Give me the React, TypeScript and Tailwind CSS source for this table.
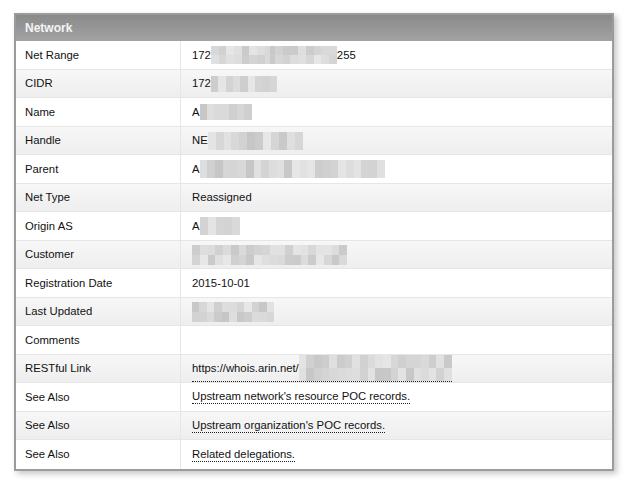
import React from "react";

type Seg = { t: "text"; v: string } | { t: "blur"; w: number; h: number; seed: number; rows?: number };

function Blur({ w, h, seed, rows = 2 }: { w: number; h: number; seed: number; rows?: number }) {
  const cell = 8;
  const cols = Math.ceil(w / cell);
  const cells: string[] = [];
  let s = seed * 9301 + 49297;
  for (let i = 0; i < cols * rows; i++) {
    s = (s * 9301 + 49297) % 233280;
    const g = 198 + Math.floor((s / 233280) * 34);
    cells.push(`rgb(${g},${g},${g})`);
  }
  return (
    <span
      className="inline-grid align-middle"
      style={{ width: w, height: h, gridTemplateColumns: `repeat(${cols}, 1fr)`, gridTemplateRows: `repeat(${rows}, 1fr)` }}
    >
      {cells.map((c, i) => (
        <span key={i} style={{ background: c }} />
      ))}
    </span>
  );
}

const rows: { label: string; value: Seg[]; link?: boolean }[] = [
  { label: "Net Range", value: [{ t: "text", v: "172" }, { t: "blur", w: 54, h: 18, seed: 1 }, { t: "blur", w: 10, h: 18, seed: 7, rows: 1 }, { t: "blur", w: 62, h: 18, seed: 2 }, { t: "text", v: "255" }] },
  { label: "CIDR", value: [{ t: "text", v: "172" }, { t: "blur", w: 66, h: 16, seed: 3, rows: 1 }] },
  { label: "Name", value: [{ t: "text", v: "A" }, { t: "blur", w: 52, h: 16, seed: 4, rows: 1 }] },
  { label: "Handle", value: [{ t: "text", v: "NE" }, { t: "blur", w: 95, h: 18, seed: 5, rows: 1 }] },
  { label: "Parent", value: [{ t: "text", v: "A" }, { t: "blur", w: 185, h: 18, seed: 6, rows: 1 }] },
  { label: "Net Type", value: [{ t: "text", v: "Reassigned" }] },
  { label: "Origin AS", value: [{ t: "text", v: "A" }, { t: "blur", w: 40, h: 18, seed: 8, rows: 1 }] },
  { label: "Customer", value: [{ t: "blur", w: 155, h: 20, seed: 9 }] },
  { label: "Registration Date", value: [{ t: "text", v: "2015-10-01" }] },
  { label: "Last Updated", value: [{ t: "blur", w: 82, h: 20, seed: 10 }] },
  { label: "Comments", value: [] },
  { label: "RESTful Link", link: true, value: [{ t: "text", v: "https://whois.arin.net/" }, { t: "blur", w: 153, h: 26, seed: 11 }] },
  { label: "See Also", link: true, value: [{ t: "text", v: "Upstream network's resource POC records." }] },
  { label: "See Also", link: true, value: [{ t: "text", v: "Upstream organization's POC records." }] },
  { label: "See Also", link: true, value: [{ t: "text", v: "Related delegations." }] },
];

export default function App() {
  return (
    <div className="w-[630px] h-[484px] bg-white pl-[14px] pt-[13px]" style={{ fontFamily: '"Liberation Sans", Arial, sans-serif' }}>
      <div className="w-[600px] border-2 border-[#9b9b9b] bg-white shadow-[3px_3px_6px_rgba(0,0,0,0.22)]">
        <div className="h-[26px] flex items-center pl-[9px] bg-gradient-to-b from-[#8a8a8a] to-[#a3a3a3] text-[12px] font-bold text-[#f4f4f4]">
          Network
        </div>
        {rows.map((r, i) => (
          <div
            key={i}
            className={`flex h-[28.5px] text-[11.3px] text-[#111] ${i < rows.length - 1 ? "border-b border-[#e6e6e6]" : ""} ${
              i % 2 === 1 ? "bg-gradient-to-b from-[#f7f7f7] to-[#eeeeee]" : "bg-white"
            }`}
          >
            <div className="w-[165px] shrink-0 flex items-center pl-[9px] pt-px border-r border-[#e6e6e6]">{r.label}</div>
            <div className="flex items-center pl-[11px] pt-px">
              <span className={r.link ? "flex items-center border-b border-dotted border-[#222] leading-[13px]" : "flex items-center"}>
                {r.value.map((s, j) =>
                  s.t === "text" ? (
                    <span key={j}>{s.v}</span>
                  ) : (
                    <Blur key={j} w={s.w} h={s.h} seed={s.seed} rows={s.rows} />
                  )
                )}
              </span>
            </div>
          </div>
        ))}
      </div>
    </div>
  );
}
